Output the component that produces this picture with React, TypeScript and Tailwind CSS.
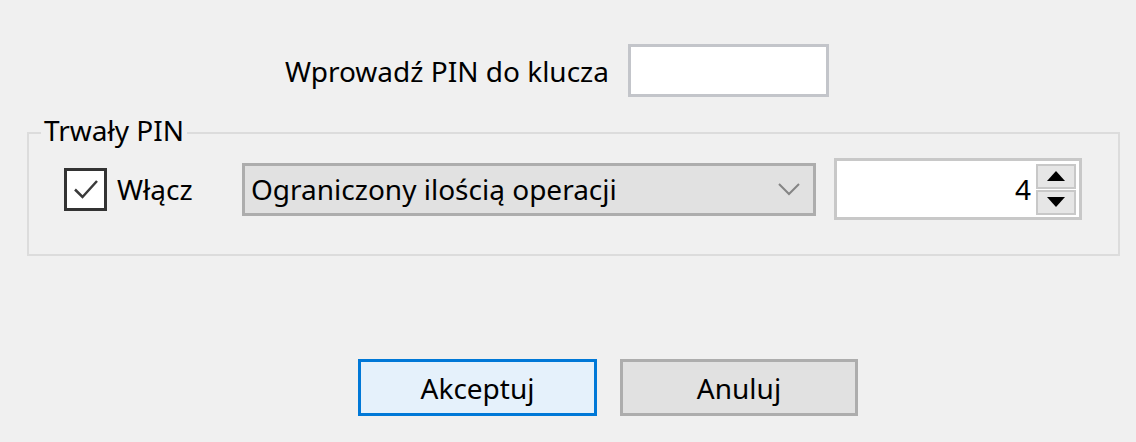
import React from "react";

export default function App() {
  return (
    <div className="w-[1136px] h-[442px] bg-[#f0f0f0] flex flex-col text-[28px] leading-none text-black font-['Segoe_UI','Noto_Sans',sans-serif] overflow-hidden">
      <div className="flex items-center pt-[44px] pl-[285px]">
        <span className="w-[323px] whitespace-nowrap">Wprowadź PIN do klucza</span>
        <div className="ml-[20px] w-[201px] h-[53px] border-[3px] border-[#c3c5ca] bg-white" />
      </div>

      <div className="relative mt-[35px] ml-[27px] w-[1093px] h-[124px] border-2 border-[#dcdcdc]">
        <span className="absolute left-[12px] top-[-18px] px-[3px] bg-[#f0f0f0] whitespace-nowrap">Trwały PIN</span>
        <div className="flex items-center mt-[24px] pl-[35px] h-[62px]">
          <div className="w-[43px] h-[43px] border-[3px] border-[#333333] bg-white flex items-center justify-center">
            <svg width="30" height="24" viewBox="0 0 30 24" fill="none">
              <path d="M4 12.5 L11.5 20 L26 4" stroke="#3a3a3a" strokeWidth="2.5" />
            </svg>
          </div>
          <span className="ml-[10px] w-[125px] whitespace-nowrap">Włącz</span>
          <div className="w-[574px] h-[53px] border-[3px] border-[#adadad] bg-[#e1e1e1] flex items-center pl-[6px] pr-[12px]">
            <span className="flex-1 whitespace-nowrap">Ograniczony ilością operacji</span>
            <svg width="24" height="14" viewBox="0 0 24 14" fill="none">
              <path d="M2 2 L12 12 L22 2" stroke="#858585" strokeWidth="2" />
            </svg>
          </div>
          <div className="ml-[18px] w-[248px] h-[62px] border-[3px] border-[#c8c8c8] bg-white flex items-center pr-[3px]">
            <span className="flex-1 text-right pr-[5px]">4</span>
            <div className="flex flex-col w-[40px] gap-[1px]">
              <div className="h-[25px] border-[2px] border-[#c8c8c8] bg-[#e6e6e6] flex items-center justify-center">
                <svg width="18" height="10" viewBox="0 0 18 10"><path d="M9 0 L18 10 L0 10 Z" fill="#000" /></svg>
              </div>
              <div className="h-[25px] border-[2px] border-[#c8c8c8] bg-[#e6e6e6] flex items-center justify-center">
                <svg width="18" height="10" viewBox="0 0 18 10"><path d="M0 0 L18 0 L9 10 Z" fill="#000" /></svg>
              </div>
            </div>
          </div>
        </div>
      </div>

      <div className="flex mt-[103px] pl-[358px] gap-[23px]">
        <div className="w-[239px] h-[57px] border-[3px] border-[#0078d7] bg-[#e5f1fb] flex items-center justify-center">Akceptuj</div>
        <div className="w-[238px] h-[57px] border-[3px] border-[#adadad] bg-[#e1e1e1] flex items-center justify-center">Anuluj</div>
      </div>
    </div>
  );
}
